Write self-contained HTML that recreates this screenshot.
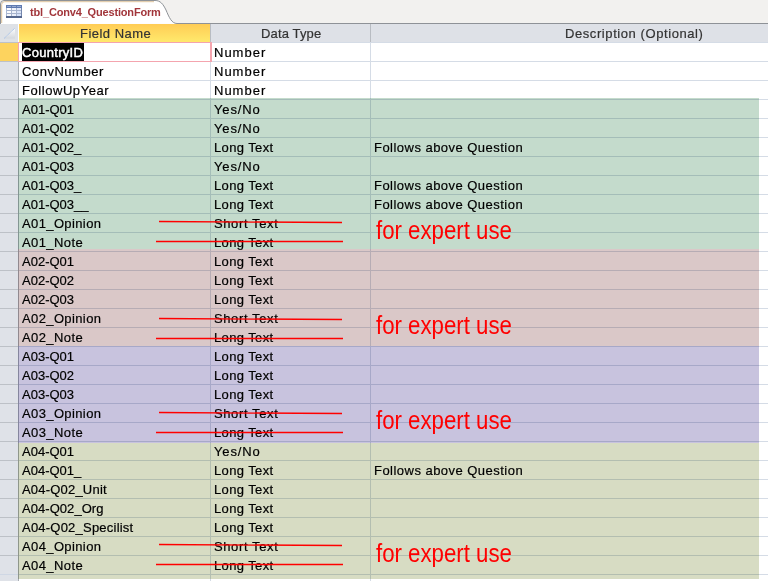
<!DOCTYPE html>
<html><head><meta charset="utf-8"><style>
html,body{margin:0;padding:0;}
body{width:768px;height:581px;overflow:hidden;position:relative;background:#fff;font-family:"Liberation Sans",sans-serif;}
.a{position:absolute;}
.t{position:absolute;font-size:13px;line-height:19px;height:19px;white-space:pre;color:#000;letter-spacing:0.55px;-webkit-text-stroke:0.2px #000;}
.h{position:absolute;font-size:13px;line-height:18px;white-space:pre;color:#333;letter-spacing:0.3px;top:25px;-webkit-text-stroke:0.2px #333;}
.fx{position:absolute;font-size:26px;line-height:30px;white-space:pre;color:#ff0000;transform-origin:0 0;transform:scaleX(0.855);}
.ov{position:absolute;left:18px;width:741px;mix-blend-mode:multiply;}
</style></head><body>

<div class="a" style="left:0;top:0;width:768px;height:24px;background:#F2F1EF"></div>
<svg class="a" style="left:0;top:0" width="768" height="24" viewBox="0 0 768 24">
<path d="M0.5,24 L0.5,4 Q0.5,0.5 4,0.5 L155,0.5 C160.5,0.5 163,4 166,10 C169,17 171.5,23.5 177,23.5 L768,23.5" fill="#fff" stroke="#8E9297" stroke-width="1"/>
<path d="M177,23.5 L768,23.5" stroke="#8E9297" stroke-width="1"/>
<path d="M1.7,23 L1.7,4.5 Q1.7,1.7 4.5,1.7 L154,1.7" fill="none" stroke="#DCC29C" stroke-width="1"/>
</svg>
<svg class="a" style="left:6px;top:5px" width="16" height="13" viewBox="0 0 16 13" shape-rendering="crispEdges">
<rect x="0" y="0" width="16" height="13" fill="#A6B3CD"/>
<rect x="0" y="0" width="1" height="13" fill="#A9B8D4"/>
<rect x="15" y="0" width="1" height="13" fill="#7386AD"/>
<rect x="0" y="0" width="16" height="3" fill="#5F7AB0"/>
<rect x="1" y="1" width="4" height="1" fill="#97AAD0"/><rect x="6" y="1" width="4" height="1" fill="#97AAD0"/><rect x="11" y="1" width="4" height="1" fill="#97AAD0"/>
<rect x="1" y="3" width="4" height="2" fill="#FDFDFE"/><rect x="6" y="3" width="4" height="2" fill="#F0F3FA"/><rect x="11" y="3" width="4" height="2" fill="#E0E8F8"/>
<rect x="1" y="6" width="4" height="2" fill="#FAFBFD"/><rect x="6" y="6" width="4" height="2" fill="#EDF1F9"/><rect x="11" y="6" width="4" height="2" fill="#DAE4F8"/>
<rect x="1" y="9" width="4" height="2" fill="#F6F8FC"/><rect x="6" y="9" width="4" height="2" fill="#E9EEF9"/><rect x="11" y="9" width="4" height="2" fill="#D4E0F8"/>
<rect x="0" y="11" width="16" height="2" fill="#55678D"/>
</svg>
<div class="a" style="left:30px;top:5px;font-size:11px;font-weight:bold;color:#A2363B;line-height:14px;white-space:pre;letter-spacing:-0.17px">tbl_Conv4_QuestionForm</div>
<div class="a" style="left:0;top:24px;width:18px;height:18px;background:#DEE1E6"></div>
<svg class="a" style="left:0;top:24px" width="19" height="18" viewBox="0 0 19 18">
<defs><linearGradient id="sg" x1="0" y1="0" x2="0" y2="1"><stop offset="0" stop-color="#fff"/><stop offset="1" stop-color="#D3D7DD"/></linearGradient></defs>
<path d="M4,14.5 L15,4 L15,14.5 Z" fill="url(#sg)"/>
<path d="M4,14.5 L15,4" stroke="#A3C0EA" stroke-width="1" stroke-dasharray="1.2 0.6"/>
</svg>
<div class="a" style="left:19px;top:24px;width:191px;height:18px;background:linear-gradient(#FFCC55,#FFE96C)"></div>
<div class="a" style="left:210px;top:24px;width:558px;height:18px;background:#DEE1E7"></div>
<div class="a" style="left:210px;top:24px;width:1px;height:18px;background:#B8BCC2"></div>
<div class="a" style="left:370px;top:24px;width:1px;height:18px;background:#B8BCC2"></div>
<div class="h" style="left:80px;letter-spacing:0.48px">Field Name</div>
<div class="h" style="left:261px;letter-spacing:0.15px">Data Type</div>
<div class="h" style="left:565px;letter-spacing:0.58px">Description (Optional)</div>
<div class="a" style="left:0;top:42px;width:18px;height:539px;background:#DFE2E8"></div>
<div class="a" style="left:18px;top:42px;width:1px;height:539px;background:#AAAFB6"></div>
<div class="a" style="left:0;top:42px;width:18px;height:1px;background:#BDC1C7"></div>
<div class="a" style="left:19px;top:42px;width:749px;height:1px;background:#D5DCE6"></div>
<div class="a" style="left:0;top:61px;width:18px;height:1px;background:#BDC1C7"></div>
<div class="a" style="left:19px;top:61px;width:749px;height:1px;background:#D5DCE6"></div>
<div class="a" style="left:0;top:80px;width:18px;height:1px;background:#BDC1C7"></div>
<div class="a" style="left:19px;top:80px;width:749px;height:1px;background:#D5DCE6"></div>
<div class="a" style="left:0;top:99px;width:18px;height:1px;background:#BDC1C7"></div>
<div class="a" style="left:19px;top:99px;width:749px;height:1px;background:#D5DCE6"></div>
<div class="a" style="left:0;top:118px;width:18px;height:1px;background:#BDC1C7"></div>
<div class="a" style="left:19px;top:118px;width:749px;height:1px;background:#D5DCE6"></div>
<div class="a" style="left:0;top:137px;width:18px;height:1px;background:#BDC1C7"></div>
<div class="a" style="left:19px;top:137px;width:749px;height:1px;background:#D5DCE6"></div>
<div class="a" style="left:0;top:156px;width:18px;height:1px;background:#BDC1C7"></div>
<div class="a" style="left:19px;top:156px;width:749px;height:1px;background:#D5DCE6"></div>
<div class="a" style="left:0;top:175px;width:18px;height:1px;background:#BDC1C7"></div>
<div class="a" style="left:19px;top:175px;width:749px;height:1px;background:#D5DCE6"></div>
<div class="a" style="left:0;top:194px;width:18px;height:1px;background:#BDC1C7"></div>
<div class="a" style="left:19px;top:194px;width:749px;height:1px;background:#D5DCE6"></div>
<div class="a" style="left:0;top:213px;width:18px;height:1px;background:#BDC1C7"></div>
<div class="a" style="left:19px;top:213px;width:749px;height:1px;background:#D5DCE6"></div>
<div class="a" style="left:0;top:232px;width:18px;height:1px;background:#BDC1C7"></div>
<div class="a" style="left:19px;top:232px;width:749px;height:1px;background:#D5DCE6"></div>
<div class="a" style="left:0;top:251px;width:18px;height:1px;background:#BDC1C7"></div>
<div class="a" style="left:19px;top:251px;width:749px;height:1px;background:#D5DCE6"></div>
<div class="a" style="left:0;top:270px;width:18px;height:1px;background:#BDC1C7"></div>
<div class="a" style="left:19px;top:270px;width:749px;height:1px;background:#D5DCE6"></div>
<div class="a" style="left:0;top:289px;width:18px;height:1px;background:#BDC1C7"></div>
<div class="a" style="left:19px;top:289px;width:749px;height:1px;background:#D5DCE6"></div>
<div class="a" style="left:0;top:308px;width:18px;height:1px;background:#BDC1C7"></div>
<div class="a" style="left:19px;top:308px;width:749px;height:1px;background:#D5DCE6"></div>
<div class="a" style="left:0;top:327px;width:18px;height:1px;background:#BDC1C7"></div>
<div class="a" style="left:19px;top:327px;width:749px;height:1px;background:#D5DCE6"></div>
<div class="a" style="left:0;top:346px;width:18px;height:1px;background:#BDC1C7"></div>
<div class="a" style="left:19px;top:346px;width:749px;height:1px;background:#D5DCE6"></div>
<div class="a" style="left:0;top:365px;width:18px;height:1px;background:#BDC1C7"></div>
<div class="a" style="left:19px;top:365px;width:749px;height:1px;background:#D5DCE6"></div>
<div class="a" style="left:0;top:384px;width:18px;height:1px;background:#BDC1C7"></div>
<div class="a" style="left:19px;top:384px;width:749px;height:1px;background:#D5DCE6"></div>
<div class="a" style="left:0;top:403px;width:18px;height:1px;background:#BDC1C7"></div>
<div class="a" style="left:19px;top:403px;width:749px;height:1px;background:#D5DCE6"></div>
<div class="a" style="left:0;top:422px;width:18px;height:1px;background:#BDC1C7"></div>
<div class="a" style="left:19px;top:422px;width:749px;height:1px;background:#D5DCE6"></div>
<div class="a" style="left:0;top:441px;width:18px;height:1px;background:#BDC1C7"></div>
<div class="a" style="left:19px;top:441px;width:749px;height:1px;background:#D5DCE6"></div>
<div class="a" style="left:0;top:460px;width:18px;height:1px;background:#BDC1C7"></div>
<div class="a" style="left:19px;top:460px;width:749px;height:1px;background:#D5DCE6"></div>
<div class="a" style="left:0;top:479px;width:18px;height:1px;background:#BDC1C7"></div>
<div class="a" style="left:19px;top:479px;width:749px;height:1px;background:#D5DCE6"></div>
<div class="a" style="left:0;top:498px;width:18px;height:1px;background:#BDC1C7"></div>
<div class="a" style="left:19px;top:498px;width:749px;height:1px;background:#D5DCE6"></div>
<div class="a" style="left:0;top:517px;width:18px;height:1px;background:#BDC1C7"></div>
<div class="a" style="left:19px;top:517px;width:749px;height:1px;background:#D5DCE6"></div>
<div class="a" style="left:0;top:536px;width:18px;height:1px;background:#BDC1C7"></div>
<div class="a" style="left:19px;top:536px;width:749px;height:1px;background:#D5DCE6"></div>
<div class="a" style="left:0;top:555px;width:18px;height:1px;background:#BDC1C7"></div>
<div class="a" style="left:19px;top:555px;width:749px;height:1px;background:#D5DCE6"></div>
<div class="a" style="left:0;top:574px;width:18px;height:1px;background:#CFD7E4"></div>
<div class="a" style="left:19px;top:574px;width:749px;height:1px;background:#D5DCE6"></div>
<div class="a" style="left:210px;top:42px;width:1px;height:539px;background:#D5DCE6"></div>
<div class="a" style="left:370px;top:42px;width:1px;height:539px;background:#D5DCE6"></div>
<div class="a" style="left:0;top:43px;width:18px;height:18px;background:#FDD35E"></div>
<div class="a" style="left:22px;top:43px;width:62px;height:18px;background:#000"></div>
<div class="t" style="left:22px;top:43px;color:#fff;-webkit-text-stroke:0.45px #fff;letter-spacing:0.3px">CountryID</div>
<div class="t" style="left:214px;top:43px;letter-spacing:1.0px">Number</div>
<div class="t" style="left:22px;top:62px;letter-spacing:0.52px">ConvNumber</div>
<div class="t" style="left:214px;top:62px;letter-spacing:1.0px">Number</div>
<div class="t" style="left:22px;top:81px;letter-spacing:0.56px">FollowUpYear</div>
<div class="t" style="left:214px;top:81px;letter-spacing:1.0px">Number</div>
<div class="t" style="left:22px;top:100px;letter-spacing:0.0px">A01-Q01</div>
<div class="t" style="left:214px;top:100px;letter-spacing:0.86px">Yes/No</div>
<div class="t" style="left:22px;top:119px;letter-spacing:0.0px">A01-Q02</div>
<div class="t" style="left:214px;top:119px;letter-spacing:0.86px">Yes/No</div>
<div class="t" style="left:22px;top:138px;letter-spacing:0.0px">A01-Q02_</div>
<div class="t" style="left:214px;top:138px;letter-spacing:0.375px">Long Text</div>
<div class="t" style="left:374px;top:138px;letter-spacing:0.47px">Follows above Question</div>
<div class="t" style="left:22px;top:157px;letter-spacing:0.0px">A01-Q03</div>
<div class="t" style="left:214px;top:157px;letter-spacing:0.86px">Yes/No</div>
<div class="t" style="left:22px;top:176px;letter-spacing:0.0px">A01-Q03_</div>
<div class="t" style="left:214px;top:176px;letter-spacing:0.375px">Long Text</div>
<div class="t" style="left:374px;top:176px;letter-spacing:0.47px">Follows above Question</div>
<div class="t" style="left:22px;top:195px;letter-spacing:0.0px">A01-Q03__</div>
<div class="t" style="left:214px;top:195px;letter-spacing:0.375px">Long Text</div>
<div class="t" style="left:374px;top:195px;letter-spacing:0.47px">Follows above Question</div>
<div class="t" style="left:22px;top:214px;letter-spacing:0.38px">A01_Opinion</div>
<div class="t" style="left:214px;top:214px;letter-spacing:0.61px">Short Text</div>
<div class="t" style="left:22px;top:233px;letter-spacing:0.4px">A01_Note</div>
<div class="t" style="left:214px;top:233px;letter-spacing:0.375px">Long Text</div>
<div class="t" style="left:22px;top:252px;letter-spacing:0.0px">A02-Q01</div>
<div class="t" style="left:214px;top:252px;letter-spacing:0.375px">Long Text</div>
<div class="t" style="left:22px;top:271px;letter-spacing:0.0px">A02-Q02</div>
<div class="t" style="left:214px;top:271px;letter-spacing:0.375px">Long Text</div>
<div class="t" style="left:22px;top:290px;letter-spacing:0.0px">A02-Q03</div>
<div class="t" style="left:214px;top:290px;letter-spacing:0.375px">Long Text</div>
<div class="t" style="left:22px;top:309px;letter-spacing:0.38px">A02_Opinion</div>
<div class="t" style="left:214px;top:309px;letter-spacing:0.61px">Short Text</div>
<div class="t" style="left:22px;top:328px;letter-spacing:0.4px">A02_Note</div>
<div class="t" style="left:214px;top:328px;letter-spacing:0.375px">Long Text</div>
<div class="t" style="left:22px;top:347px;letter-spacing:0.0px">A03-Q01</div>
<div class="t" style="left:214px;top:347px;letter-spacing:0.375px">Long Text</div>
<div class="t" style="left:22px;top:366px;letter-spacing:0.0px">A03-Q02</div>
<div class="t" style="left:214px;top:366px;letter-spacing:0.375px">Long Text</div>
<div class="t" style="left:22px;top:385px;letter-spacing:0.0px">A03-Q03</div>
<div class="t" style="left:214px;top:385px;letter-spacing:0.375px">Long Text</div>
<div class="t" style="left:22px;top:404px;letter-spacing:0.38px">A03_Opinion</div>
<div class="t" style="left:214px;top:404px;letter-spacing:0.61px">Short Text</div>
<div class="t" style="left:22px;top:423px;letter-spacing:0.4px">A03_Note</div>
<div class="t" style="left:214px;top:423px;letter-spacing:0.375px">Long Text</div>
<div class="t" style="left:22px;top:442px;letter-spacing:0.0px">A04-Q01</div>
<div class="t" style="left:214px;top:442px;letter-spacing:0.86px">Yes/No</div>
<div class="t" style="left:22px;top:461px;letter-spacing:0.0px">A04-Q01_</div>
<div class="t" style="left:214px;top:461px;letter-spacing:0.375px">Long Text</div>
<div class="t" style="left:374px;top:461px;letter-spacing:0.47px">Follows above Question</div>
<div class="t" style="left:22px;top:480px;letter-spacing:0.2px">A04-Q02_Unit</div>
<div class="t" style="left:214px;top:480px;letter-spacing:0.375px">Long Text</div>
<div class="t" style="left:22px;top:499px;letter-spacing:0.05px">A04-Q02_Org</div>
<div class="t" style="left:214px;top:499px;letter-spacing:0.375px">Long Text</div>
<div class="t" style="left:22px;top:518px;letter-spacing:0.22px">A04-Q02_Specilist</div>
<div class="t" style="left:214px;top:518px;letter-spacing:0.375px">Long Text</div>
<div class="t" style="left:22px;top:537px;letter-spacing:0.38px">A04_Opinion</div>
<div class="t" style="left:214px;top:537px;letter-spacing:0.61px">Short Text</div>
<div class="t" style="left:22px;top:556px;letter-spacing:0.4px">A04_Note</div>
<div class="t" style="left:214px;top:556px;letter-spacing:0.375px">Long Text</div>
<div class="a" style="left:18px;top:42px;width:191px;height:18px;border:1px solid #F4A4AE;border-bottom-width:1.5px;border-right-width:2px"></div>
<div class="ov" style="top:98px;height:151px;background:#C4DBCC"></div>
<div class="ov" style="top:249px;height:97px;background:#DAC8C8"></div>
<div class="ov" style="top:346px;height:97px;background:#C8C3DE"></div>
<div class="ov" style="top:443px;height:136px;background:#D7DCC3"></div>
<svg class="a" style="left:0;top:0" width="768" height="581" viewBox="0 0 768 581">
<line x1="159" y1="221.5" x2="342" y2="222.5" stroke="#FF0000" stroke-width="1.3"/>
<line x1="156" y1="241.5" x2="343" y2="241.5" stroke="#FF0000" stroke-width="1.3"/>
<line x1="159" y1="318.5" x2="342" y2="319.5" stroke="#FF0000" stroke-width="1.3"/>
<line x1="156" y1="338.5" x2="343" y2="338.5" stroke="#FF0000" stroke-width="1.3"/>
<line x1="159" y1="412.5" x2="342" y2="413.5" stroke="#FF0000" stroke-width="1.3"/>
<line x1="156" y1="432.5" x2="343" y2="432.5" stroke="#FF0000" stroke-width="1.3"/>
<line x1="159" y1="544.5" x2="342" y2="545.5" stroke="#FF0000" stroke-width="1.3"/>
<line x1="156" y1="564.5" x2="343" y2="564.5" stroke="#FF0000" stroke-width="1.3"/>
</svg>
<div class="fx" style="left:376px;top:214.5px">for expert use</div>
<div class="fx" style="left:376px;top:309.5px">for expert use</div>
<div class="fx" style="left:376px;top:404.5px">for expert use</div>
<div class="fx" style="left:376px;top:537.5px">for expert use</div>
</body></html>
